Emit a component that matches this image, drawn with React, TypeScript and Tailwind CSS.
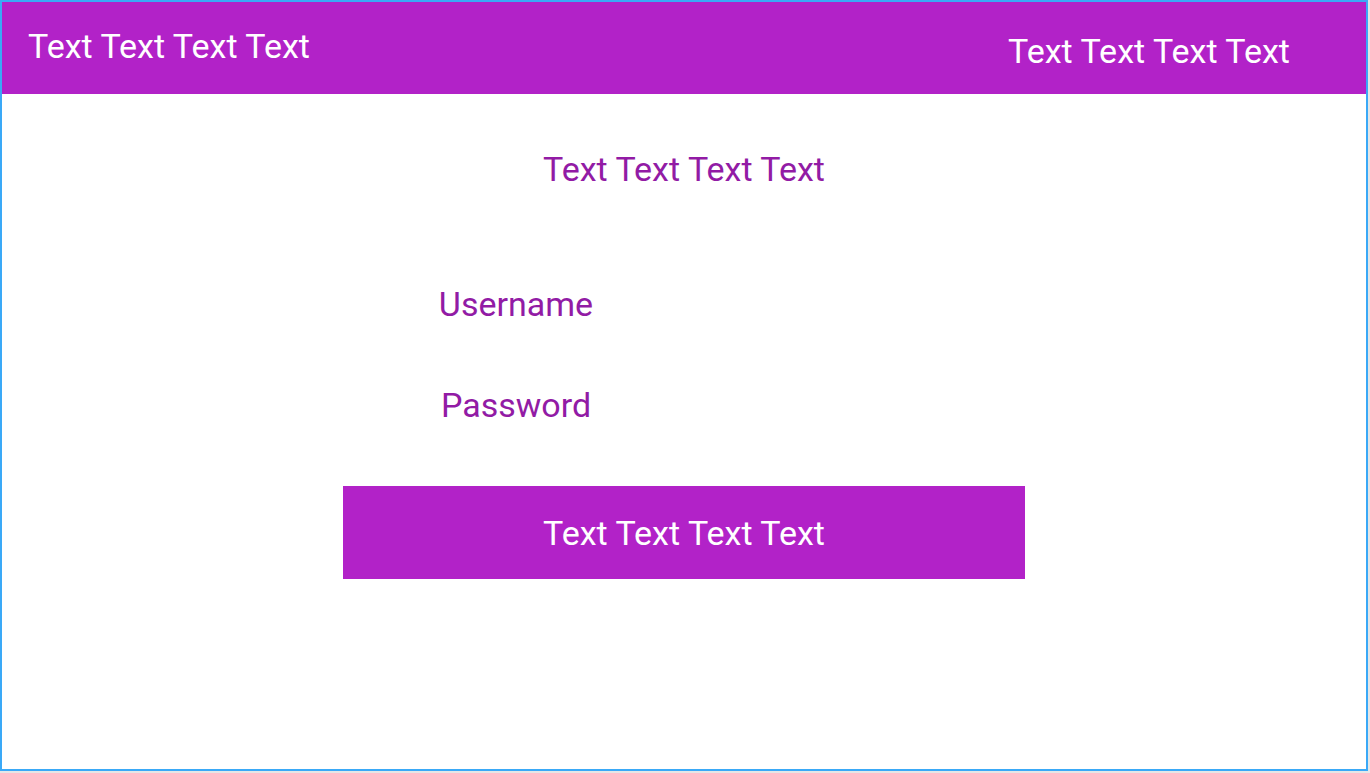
import React from "react";

const App: React.FC = () => {
  return (
    <div className="min-h-screen bg-[#e6e6e6] font-['Roboto',sans-serif]">
      <div className="w-[1368px] h-[771px] border-2 border-[#3aa9f7] bg-white flex flex-col">
        <header className="h-[92px] bg-[#b222c8] flex justify-between text-white text-[34px] leading-[38px]">
          <span className="pl-[26px] pt-[25px]">Text Text Text Text</span>
          <span className="pr-[76px] pt-[30px]">Text Text Text Text</span>
        </header>

        <main className="flex flex-col items-center text-[34px] leading-[38px] text-[#921ba5]">
          <h1 className="mt-[56px]">Text Text Text Text</h1>

          <form className="w-[682px] flex flex-col mt-[97px]">
            <label className="w-[346px] text-center">Username</label>
            <label className="w-[346px] text-center mt-[63px]">Password</label>
            <button
              type="button"
              className="mt-[62px] h-[93px] w-full bg-[#b222c8] text-white"
            >
              Text Text Text Text
            </button>
          </form>
        </main>
      </div>
    </div>
  );
};

export default App;
